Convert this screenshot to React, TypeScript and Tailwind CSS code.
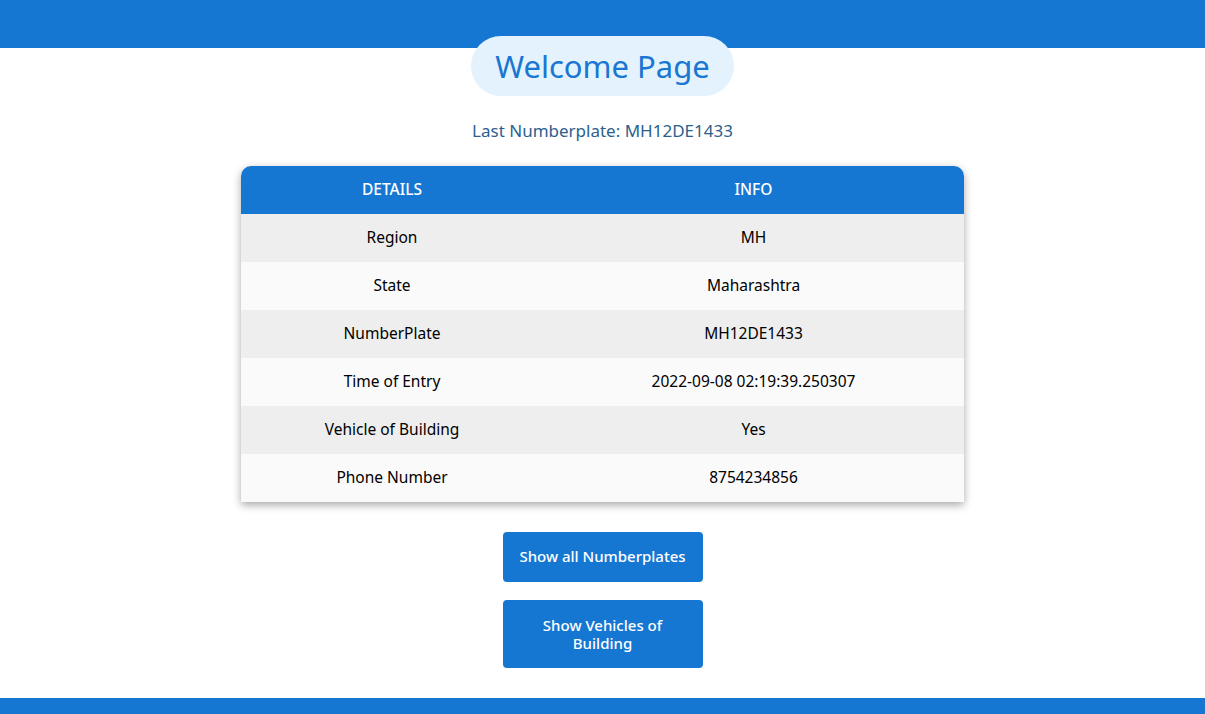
const rows = [
  { label: 'Region', value: 'MH' },
  { label: 'State', value: 'Maharashtra' },
  { label: 'NumberPlate', value: 'MH12DE1433' },
  { label: 'Time of Entry', value: '2022-09-08 02:19:39.250307' },
  { label: 'Vehicle of Building', value: 'Yes' },
  { label: 'Phone Number', value: '8754234856' },
];

const App = () => {
  return (
    <div className="min-h-[714px] flex flex-col bg-white text-black" style={{ fontFamily: '"Noto Sans", "Open Sans", sans-serif' }}>
      {/* Header bar */}
      <div className="h-12 bg-[#1677d3] shrink-0" />

      <div className="flex flex-col items-center">
        <h1 className="-mt-3 h-[60px] px-6 flex items-center rounded-full bg-[#e3f2fd] text-[#1976d2] text-[31px]">
          Welcome Page
        </h1>

        <p className="mt-[22px] text-[17px] text-[#2c5f8d]">Last Numberplate: MH12DE1433</p>

        {/* Details table */}
        <div className="mt-[22px] w-[723px] rounded-t-[10px] overflow-hidden shadow-[0_3px_8px_rgba(0,0,0,0.35)]">
          <div className="grid grid-cols-[302px_1fr] h-12 bg-[#1677d3] text-white text-[15.5px] font-medium items-center text-center">
            <div>DETAILS</div>
            <div>INFO</div>
          </div>
          {rows.map((row, idx) => (
            <div
              key={row.label}
              className={`grid grid-cols-[302px_1fr] h-12 items-center text-center text-[15.5px] ${idx % 2 === 0 ? 'bg-[#eeeeee]' : 'bg-[#fafafa]'}`}
            >
              <div>{row.label}</div>
              <div>{row.value}</div>
            </div>
          ))}
        </div>

        {/* Buttons */}
        <button className="mt-[30px] w-[200px] h-[50px] rounded bg-[#1677d3] text-white text-[15px] font-medium">
          Show all Numberplates
        </button>
        <button className="mt-[18px] w-[200px] h-[68px] px-8 rounded bg-[#1677d3] text-white text-[15px] font-medium leading-[18px]">
          Show Vehicles of Building
        </button>
      </div>

      {/* Footer bar */}
      <div className="mt-[30px] h-12 bg-[#1677d3] shrink-0" />
    </div>
  );
};

export default App;
